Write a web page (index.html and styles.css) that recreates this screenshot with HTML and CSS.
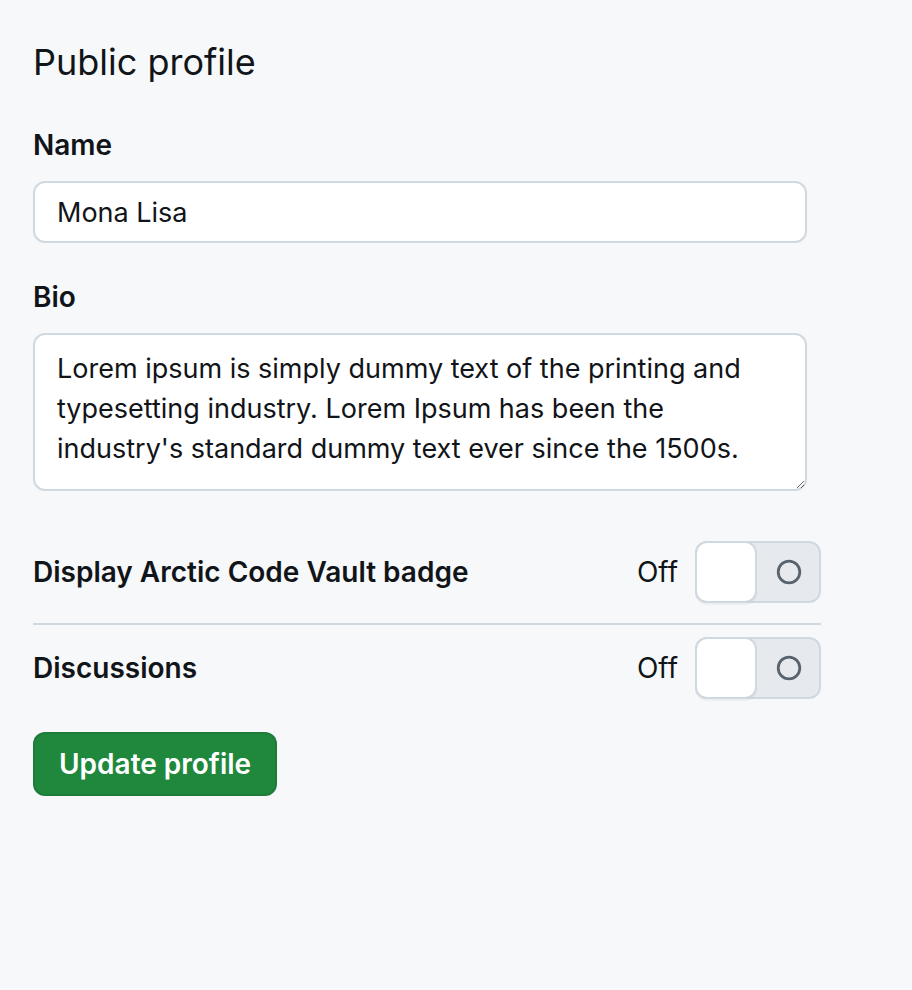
FILE: index.html
```html
<!DOCTYPE html>
<html lang="en">
<head>
<meta charset="utf-8">
<title>Public profile</title>
<link rel="stylesheet" href="styles.css">
</head>
<body>
<main class="page">
  <h1 class="title">Public profile</h1>
  <form class="form">
    <div class="field">
      <label class="label" for="name">Name</label>
      <input class="input" id="name" type="text" value="Mona Lisa">
    </div>
    <div class="field">
      <label class="label" for="bio">Bio</label>
      <textarea class="textarea" id="bio">Lorem ipsum is simply dummy text of the printing and typesetting industry. Lorem Ipsum has been the industry's standard dummy text ever since the 1500s.</textarea>
    </div>
    <div class="toggles">
      <div class="toggle-row">
        <span class="toggle-label">Display Arctic Code Vault badge</span>
        <div class="toggle-ctl">
          <span class="toggle-state">Off</span>
          <span class="switch">
            <span class="knob"></span>
            <span class="switch-icon">
              <svg width="26" height="26" viewBox="0 0 26 26"><circle cx="13" cy="13" r="10.8" fill="none" stroke="#59636e" stroke-width="2.8"/></svg>
            </span>
          </span>
        </div>
      </div>
      <div class="toggle-row">
        <span class="toggle-label">Discussions</span>
        <div class="toggle-ctl">
          <span class="toggle-state">Off</span>
          <span class="switch">
            <span class="knob"></span>
            <span class="switch-icon">
              <svg width="26" height="26" viewBox="0 0 26 26"><circle cx="13" cy="13" r="10.8" fill="none" stroke="#59636e" stroke-width="2.8"/></svg>
            </span>
          </span>
        </div>
      </div>
    </div>
    <button class="btn" type="button">Update profile</button>
  </form>
</main>
</body>
</html>
```

FILE: styles.css
```css
html, body {
  margin: 0;
  padding: 0;
  background: #f6f8fa;
}
body {
  font-family: Inter, "Noto Sans", "Liberation Sans", sans-serif;
  color: #111418;
  font-size: 28px;
  line-height: 40px;
}
.page {
  width: 788px;
  padding: 38px 0 0 33px;
}
.title {
  margin: 0;
  font-size: 36px;
  line-height: 48px;
  font-weight: 400;
  color: #111418;
}
.form {
  margin-top: 39px;
  display: flex;
  flex-direction: column;
}
.field {
  display: flex;
  flex-direction: column;
  margin-bottom: 34px;
}
.label {
  font-weight: 600;
  font-size: 28px;
  line-height: 40px;
  margin-bottom: 16px;
}
.input, .textarea {
  box-sizing: border-box;
  width: 774px;
  font-family: inherit;
  font-size: 27px;
  color: #111418;
  background: #ffffff;
  border: 2px solid #d1d9e0;
  border-radius: 12px;
  outline: none;
}
.input {
  height: 62px;
  padding: 0 22px;
  line-height: 58px;
}
.textarea {
  height: 158px;
  padding: 14px 22px;
  line-height: 40px;
  resize: vertical;
}
.toggles {
  display: flex;
  flex-direction: column;
  margin-top: 16px;
}
.toggle-row {
  display: flex;
  align-items: center;
  justify-content: space-between;
  padding: 0 0 20px;
}
.toggle-row + .toggle-row {
  border-top: 2px solid #d1d9e0;
  padding-top: 12px;
}
.toggle-label {
  font-weight: 600;
}
.toggle-ctl {
  display: flex;
  align-items: center;
  gap: 17px;
}
.switch {
  box-sizing: border-box;
  width: 126px;
  height: 62px;
  border: 2px solid #d1d9e0;
  border-radius: 12px;
  background: #e6eaef;
  display: flex;
  align-items: stretch;
}
.knob {
  box-sizing: border-box;
  width: 62px;
  margin: -2px 0 -2px -2px;
  background: #ffffff;
  border: 2px solid #d1d9e0;
  border-radius: 12px;
  box-shadow: 0 2px 0 rgba(31, 35, 40, 0.04);
}
.switch-icon {
  flex: 1;
  display: flex;
  align-items: center;
  justify-content: center;
  padding-left: 2px;
}
.switch-icon svg {
  display: block;
}
.btn {
  align-self: flex-start;
  margin-top: 13px;
  height: 64px;
  padding: 0 24px;
  font-family: inherit;
  font-size: 28px;
  font-weight: 600;
  color: #ffffff;
  background: #1f883d;
  border: 2px solid rgba(31, 35, 40, 0.12);
  border-radius: 12px;
}
```
